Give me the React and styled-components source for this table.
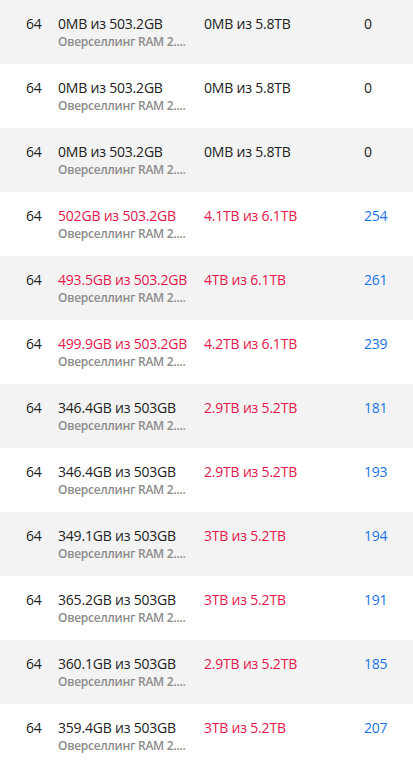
import React from 'react';
import styled, { createGlobalStyle } from 'styled-components';

const GlobalStyle = createGlobalStyle`
  html, body {
    margin: 0;
    padding: 0;
    background: #fff;
    overflow: hidden;
  }
  body {
    font-family: "Open Sans", "Noto Sans", "Liberation Sans", sans-serif;
  }
`;

const Table = styled.div`
  width: 413px;
  display: flex;
  flex-direction: column;
`;

const Row = styled.div`
  display: grid;
  grid-template-columns: 32px 146px 160px 1fr;
  align-items: start;
  height: 64px;
  box-sizing: border-box;
  padding: 14px 0 0 26px;
  background: ${p => (p.$striped ? '#f3f3f3' : '#fff')};
`;

const Cell = styled.div`
  font-size: 14px;
  line-height: 20px;
  letter-spacing: -0.2px;
  color: ${p => (p.$tone === 'danger' ? '#e5174b' : p.$tone === 'link' ? '#1a73e8' : '#222')};
  white-space: nowrap;
`;

const Stack = styled.div`
  display: flex;
  flex-direction: column;
  min-width: 0;
`;

const Note = styled.div`
  font-size: 12px;
  line-height: 16px;
  font-weight: 600;
  letter-spacing: -0.25px;
  color: #8c8c8c;
  white-space: nowrap;
`;

//строки таблицы
const rows = [
  { cpu: 64, ram: '0MB из 503.2GB', disk: '0MB из 5.8TB', vms: 0 },
  { cpu: 64, ram: '0MB из 503.2GB', disk: '0MB из 5.8TB', vms: 0 },
  { cpu: 64, ram: '0MB из 503.2GB', disk: '0MB из 5.8TB', vms: 0 },
  { cpu: 64, ram: '502GB из 503.2GB', ramHot: true, disk: '4.1TB из 6.1TB', diskHot: true, vms: 254 },
  { cpu: 64, ram: '493.5GB из 503.2GB', ramHot: true, disk: '4TB из 6.1TB', diskHot: true, vms: 261 },
  { cpu: 64, ram: '499.9GB из 503.2GB', ramHot: true, disk: '4.2TB из 6.1TB', diskHot: true, vms: 239 },
  { cpu: 64, ram: '346.4GB из 503GB', disk: '2.9TB из 5.2TB', diskHot: true, vms: 181 },
  { cpu: 64, ram: '346.4GB из 503GB', disk: '2.9TB из 5.2TB', diskHot: true, vms: 193 },
  { cpu: 64, ram: '349.1GB из 503GB', disk: '3TB из 5.2TB', diskHot: true, vms: 194 },
  { cpu: 64, ram: '365.2GB из 503GB', disk: '3TB из 5.2TB', diskHot: true, vms: 191 },
  { cpu: 64, ram: '360.1GB из 503GB', disk: '2.9TB из 5.2TB', diskHot: true, vms: 185 },
  { cpu: 64, ram: '359.4GB из 503GB', disk: '3TB из 5.2TB', diskHot: true, vms: 207 },
];

export default function App() {
  return (
    <>
      <GlobalStyle />
      <Table>
        {rows.map((row, index) => (
          <Row key={index} $striped={index % 2 === 0}>
            <Cell>{row.cpu}</Cell>
            <Stack>
              <Cell $tone={row.ramHot ? 'danger' : undefined}>{row.ram}</Cell>
              <Note>Оверселлинг RAM 2....</Note>
            </Stack>
            <Cell $tone={row.diskHot ? 'danger' : undefined}>{row.disk}</Cell>
            <Cell $tone={row.vms ? 'link' : undefined}>{row.vms}</Cell>
          </Row>
        ))}
      </Table>
    </>
  );
}
